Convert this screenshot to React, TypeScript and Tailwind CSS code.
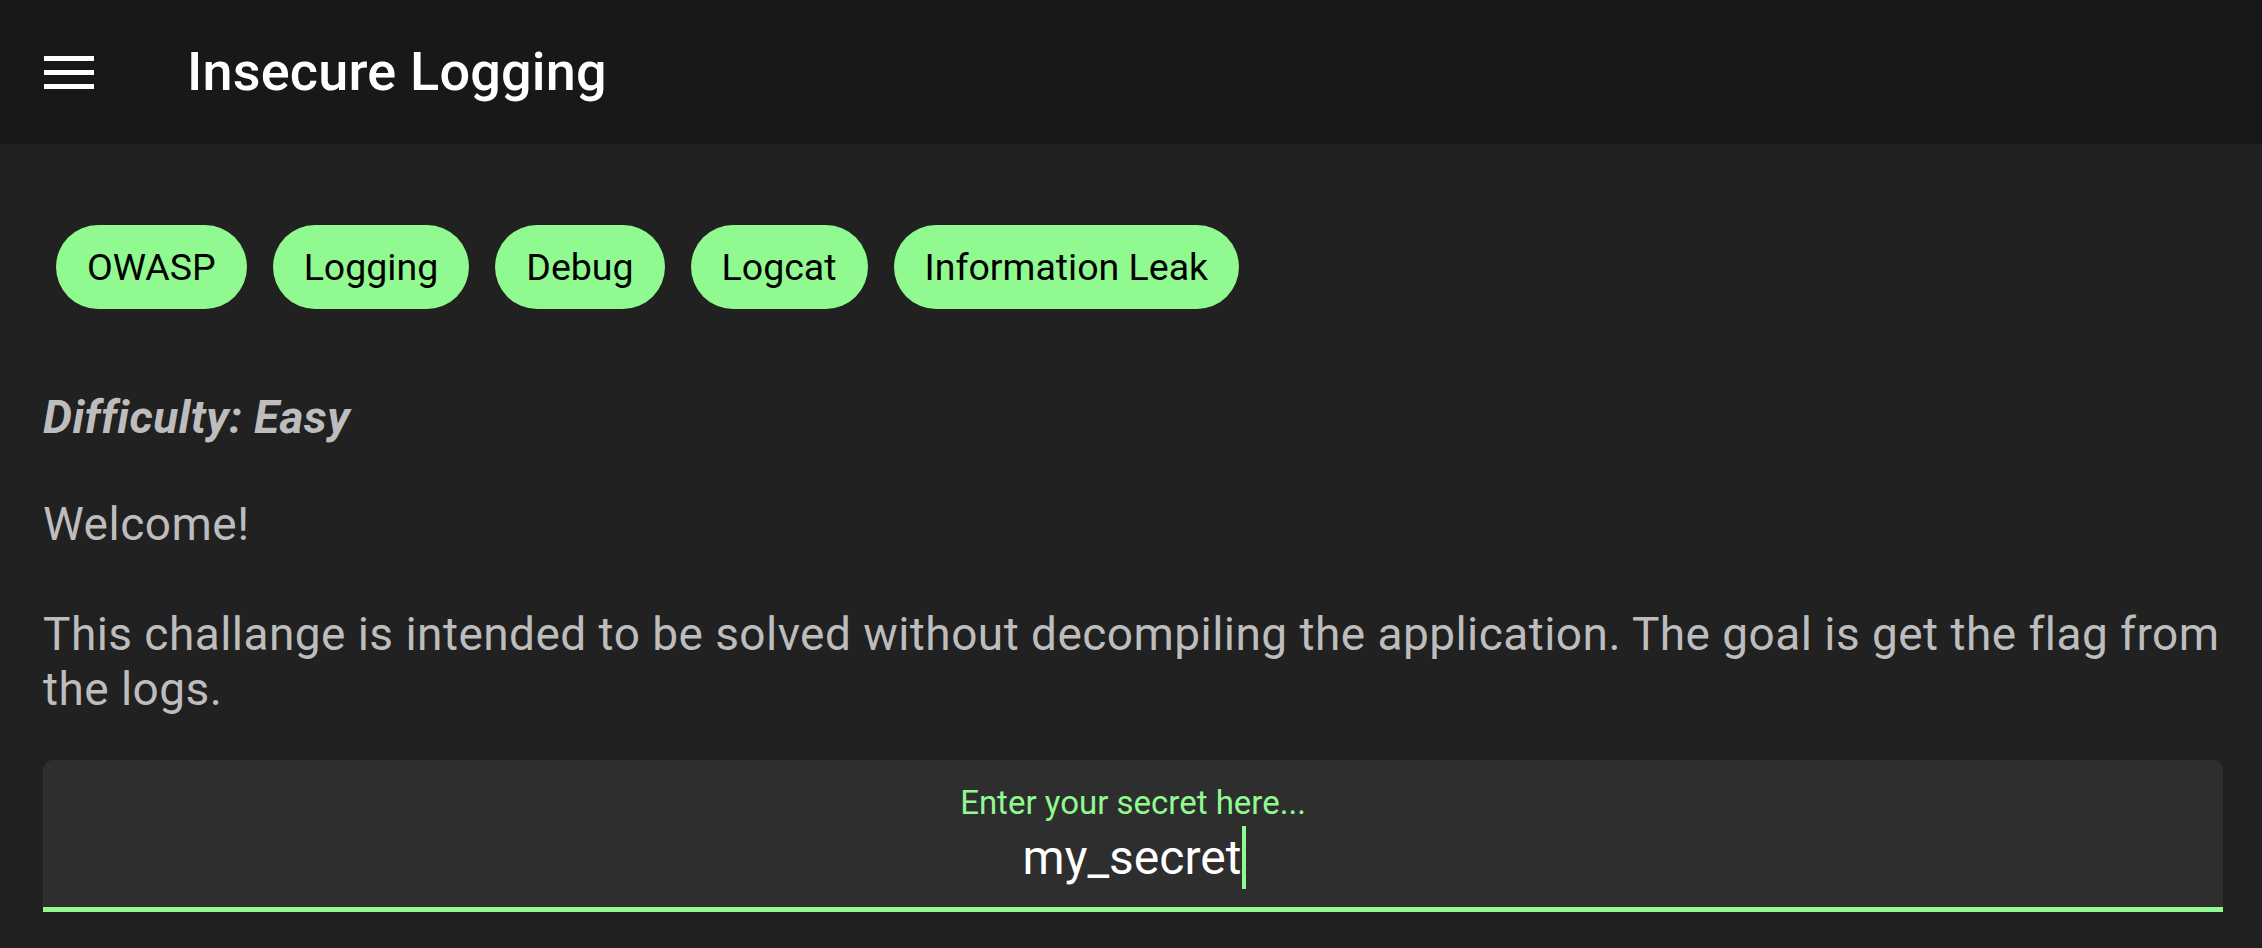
const TAGS = ['OWASP', 'Logging', 'Debug', 'Logcat', 'Information Leak']

export default function App() {
  return (
    <div className="h-[948px] overflow-hidden bg-[#212121] font-['Roboto',sans-serif]">
      {/* Toolbar */}
      <header className="flex h-[144px] items-center bg-[#181818]">
        <div className="ml-[44px] flex w-[50px] flex-col gap-[9px]">
          <span className="h-[5px] bg-white" />
          <span className="h-[5px] bg-white" />
          <span className="h-[5px] bg-white" />
        </div>
        <h1 className="ml-[93px] text-[54px] font-medium leading-none tracking-[0.2px] text-white">Insecure Logging</h1>
      </header>

      <main className="pl-[43px] pr-[39px] pt-[81px]">
        {/* Tags */}
        <div className="flex gap-[26px] pl-[13px]">
          {TAGS.map((t) => (
            <span
              key={t}
              className="flex h-[84px] items-center rounded-full bg-[#90f990] px-[31px] text-[37.5px] text-black"
            >
              {t}
            </span>
          ))}
        </div>

        <p className="mt-[81px] text-[46px] font-bold italic leading-[55px] tracking-[0.4px] text-[#bdbdbd]">Difficulty: Easy</p>

        <p className="mt-[52px] text-[46px] leading-[55px] tracking-[0.5px] text-[#bdbdbd]">Welcome!</p>

        <p className="-mr-[14px] mt-[55px] text-[46px] leading-[55px] tracking-[0.45px] text-[#bdbdbd]">
          This challange is intended to be solved without decompiling the application. The goal is get the flag from the logs.
        </p>

        {/* Secret input */}
        <div className="mt-[43px] flex h-[152px] flex-col items-center rounded-t-[10px] border-b-[5px] border-[#90f990] bg-[#2e2e2e] pt-[23px]">
          <span className="text-[33px] leading-[40px] text-[#90f990]">Enter your secret here...</span>
          <div className="mt-[3px] flex items-center pl-[3px]">
            <span className="text-[48px] leading-[60px] text-white">my_secret</span>
            <span className="ml-[1px] h-[63px] w-[4px] bg-[#90f990]" />
          </div>
        </div>
      </main>
    </div>
  )
}
